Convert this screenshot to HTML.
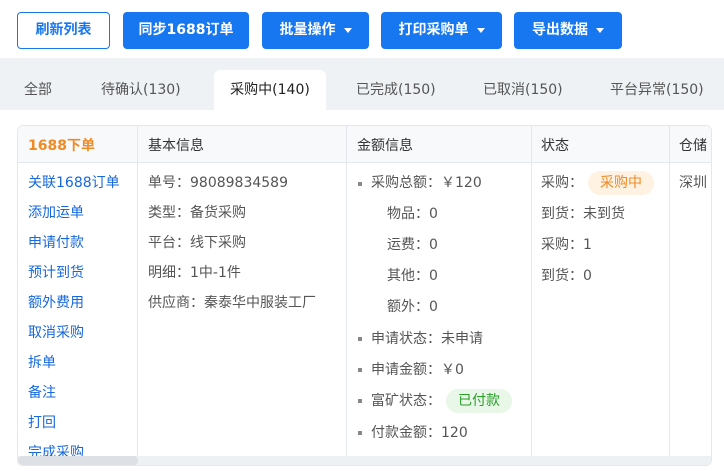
<!DOCTYPE html>
<html><head><meta charset="utf-8"><style>
*{margin:0;padding:0;box-sizing:border-box}
body{width:724px;height:471px;overflow:hidden;background:#fff;font-family:"DejaVu Sans","Noto Sans CJK SC",sans-serif;font-size:14px;color:#333;position:relative}
.btn{position:absolute;top:12px;height:37px;border-radius:4px;background:#1677f0;color:#fff;font-size:14px;line-height:37px;text-align:center;font-weight:bold}
.btn.o{background:#fff;border:1px solid #1677f0;color:#1677f0;line-height:35px}
.caret{display:inline-block;width:0;height:0;border-left:4px solid transparent;border-right:4px solid transparent;border-top:5px solid #fff;vertical-align:middle;margin-left:8px}
.tabs{position:absolute;top:58px;left:0;width:724px;height:52px;background:#eef2f5}
.tab{position:absolute;top:12px;height:40px;line-height:40px;color:#555;font-size:14px}
.tab.a{background:#fff;border-radius:6px 6px 0 0;color:#222;text-align:center}
.tbl{position:absolute;left:17px;top:125px;width:695px;height:341px;border:1px solid #e3e8ee;border-radius:6px;overflow:hidden}
.hd{position:absolute;top:0;left:0;right:0;height:37px;background:#f7f9fb;border-bottom:1px solid #e3e8ee}
.col{position:absolute;top:0;bottom:0;border-left:1px solid #e3e8ee}
.h{position:absolute;top:9px;font-size:14px;color:#333}
.t{position:absolute;white-space:nowrap;font-size:14px;line-height:20px}
.lk{color:#1668dc}
.dot{position:absolute;width:4px;height:4px;background:#888}
.tag{display:inline-block;padding:0 12px;border-radius:12px;line-height:24px;margin-left:5px}
.sb{position:absolute;left:0;right:0;bottom:0;height:9px;background:#eef1f4}
.sbt{position:absolute;left:0;bottom:0;width:120px;height:9px;background:#dde1e6;border-radius:4px}
</style></head><body>
<div class="btn o" style="left:17px;width:93px">刷新列表</div>
<div class="btn" style="left:123px;width:126px">同步1688订单</div>
<div class="btn" style="left:262px;width:107px">批量操作<span class="caret"></span></div>
<div class="btn" style="left:381px;width:121px">打印采购单<span class="caret"></span></div>
<div class="btn" style="left:514px;width:108px">导出数据<span class="caret"></span></div>
<div class="tabs">
<div class="tab" style="left:24px">全部</div>
<div class="tab" style="left:101px">待确认(130)</div>
<div class="tab a" style="left:214px;width:112px">采购中(140)</div>
<div class="tab" style="left:356px">已完成(150)</div>
<div class="tab" style="left:483px">已取消(150)</div>
<div class="tab" style="left:610px">平台异常(150)</div>
</div>
<div class="tbl">
<div class="hd"></div>
<div class="col" style="left:119px"></div>
<div class="col" style="left:328px"></div>
<div class="col" style="left:513px"></div>
<div class="col" style="left:651px"></div>
<div class="h" style="left:10px;color:#f08a24;font-weight:bold">1688下单</div>
<div class="h" style="left:130px">基本信息</div>
<div class="h" style="left:339px">金额信息</div>
<div class="h" style="left:523px">状态</div>
<div class="h" style="left:661px">仓储</div>

<div class="t lk" style="left:10px;top:47px">关联1688订单</div>
<div class="t lk" style="left:10px;top:77px">添加运单</div>
<div class="t lk" style="left:10px;top:107px">申请付款</div>
<div class="t lk" style="left:10px;top:137px">预计到货</div>
<div class="t lk" style="left:10px;top:167px">额外费用</div>
<div class="t lk" style="left:10px;top:197px">取消采购</div>
<div class="t lk" style="left:10px;top:227px">拆单</div>
<div class="t lk" style="left:10px;top:257px">备注</div>
<div class="t lk" style="left:10px;top:287px">打回</div>
<div class="t lk" style="left:10px;top:317px">完成采购</div>

<div class="t" style="left:130px;top:47px;color:#555">单号：98089834589</div>
<div class="t" style="left:130px;top:77px;color:#555">类型：备货采购</div>
<div class="t" style="left:130px;top:107px;color:#555">平台：线下采购</div>
<div class="t" style="left:130px;top:137px;color:#555">明细：1中-1件</div>
<div class="t" style="left:130px;top:167px;color:#555">供应商：秦泰华中服装工厂</div>

<div class="dot" style="left:340px;top:56px"></div><div class="t" style="left:353px;top:47px;color:#555">采购总额：￥120</div>
<div class="t" style="left:369px;top:78px;color:#555">物品：0</div>
<div class="t" style="left:369px;top:109px;color:#555">运费：0</div>
<div class="t" style="left:369px;top:140px;color:#555">其他：0</div>
<div class="t" style="left:369px;top:171px;color:#555">额外：0</div>
<div class="dot" style="left:340px;top:211px"></div><div class="t" style="left:353px;top:203px;color:#555">申请状态：未申请</div>
<div class="dot" style="left:340px;top:242px"></div><div class="t" style="left:353px;top:234px;color:#555">申请金额：￥0</div>
<div class="dot" style="left:340px;top:273px"></div><div class="t" style="left:353px;top:263px;color:#555">富矿状态：<span class="tag" style="background:#e8f7e8;color:#2a9d2a">已付款</span></div>
<div class="dot" style="left:340px;top:305px"></div><div class="t" style="left:353px;top:297px;color:#555">付款金额：120</div>

<div class="t" style="left:523px;top:45px;color:#555">采购：<span class="tag" style="background:#fff2e2;color:#f08a24">采购中</span></div>
<div class="t" style="left:523px;top:78px;color:#555">到货：未到货</div>
<div class="t" style="left:523px;top:109px;color:#555">采购：1</div>
<div class="t" style="left:523px;top:140px;color:#555">到货：0</div>
<div class="t" style="left:661px;top:47px;color:#555">深圳</div>
<div class="sb"><div class="sbt"></div></div>
</div>
</body></html>
